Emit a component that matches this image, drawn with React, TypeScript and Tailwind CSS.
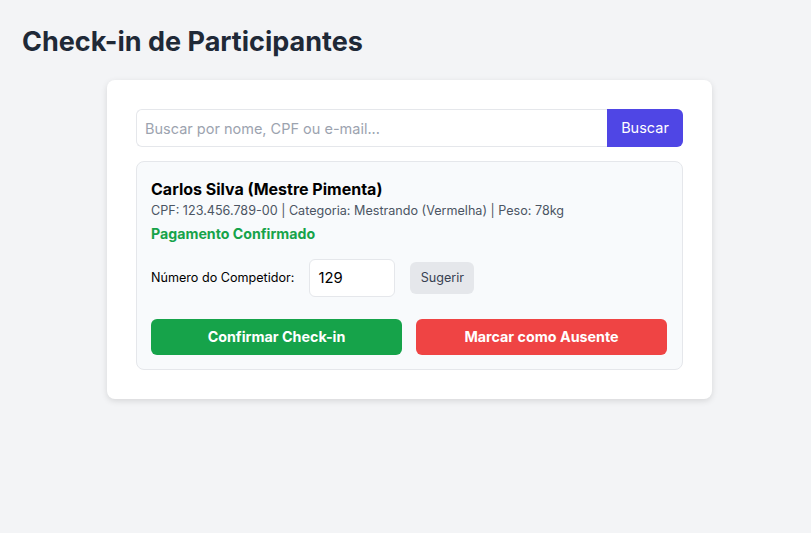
export default function App() {
  return (
    <div
      className="min-h-[533px] bg-[#f3f4f6] px-[22px] pt-[24px]"
      style={{ fontFamily: "Inter, 'Noto Sans', sans-serif" }}
    >
      <h1 className="text-[27px] font-bold leading-[36px] text-[#1f2937]">
        Check-in de Participantes
      </h1>

      <div className="ml-[85px] mt-[20px] w-[605px] rounded-lg bg-white p-[29px] shadow-[0_2px_6px_rgba(0,0,0,0.12)]">
        <div className="flex h-[38px]">
          <input
            className="h-full flex-1 rounded-l-md border border-r-0 border-[#e5e7eb] px-2 text-[14.5px] text-gray-900 placeholder:text-[#9ca3af] outline-none"
            placeholder="Buscar por nome, CPF ou e-mail..."
          />
          <button className="h-full w-[76px] rounded-r-md bg-[#4f46e5] text-[14.5px] text-white">
            Buscar
          </button>
        </div>

        <div className="mt-[14px] rounded-lg border border-[#e5e7eb] bg-[#f8fafc] pb-[14px] pl-[14px] pr-[15px] pt-[16px]">
          <div className="text-[16px] font-bold leading-[22px] text-black">
            Carlos Silva (Mestre Pimenta)
          </div>
          <div className="mt-[1px] text-[12.6px] leading-[20px] text-[#4b5563]">
            CPF: 123.456.789-00 | Categoria: Mestrando (Vermelha) | Peso: 78kg
          </div>
          <div className="mt-[3px] text-[14.2px] font-bold leading-[20px] text-[#16a34a]">
            Pagamento Confirmado
          </div>

          <div className="mt-[15px] flex items-center">
            <span className="text-[12.6px] text-black">Número do Competidor:</span>
            <input
              className="ml-[15px] h-[38px] w-[86px] rounded-md border border-[#e5e7eb] bg-white px-2 text-[14.8px] text-black outline-none"
              defaultValue="129"
            />
            <button className="ml-[15px] h-[32px] w-[64px] rounded-md bg-[#e5e7eb] text-[12.6px] text-[#374151]">
              Sugerir
            </button>
          </div>

          <div className="mt-[22px] flex gap-[14px]">
            <button className="h-[36px] flex-1 rounded-md bg-[#16a34a] text-[14.3px] font-bold text-white">
              Confirmar Check-in
            </button>
            <button className="h-[36px] flex-1 rounded-md bg-[#ef4444] text-[14.3px] font-bold text-white">
              Marcar como Ausente
            </button>
          </div>
        </div>
      </div>
    </div>
  );
}
